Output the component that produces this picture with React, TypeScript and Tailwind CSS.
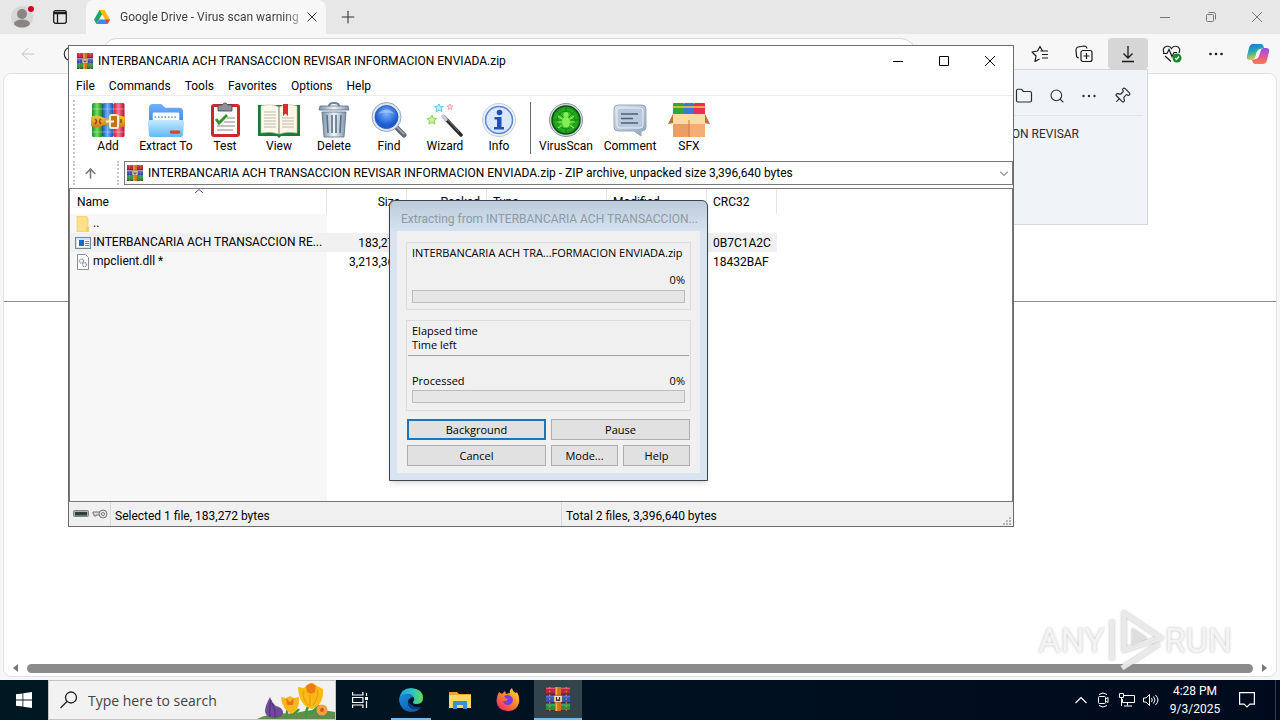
import React from 'react';
import { ArrowLeft, ArrowUp, Folder, Pin, Plus, RotateCw, Search } from 'lucide-react';

interface Tool {
  label: string;
  width: string;
  icon: React.ReactNode;
}

interface FileRow {
  name: string;
  size: string;
  crc: string;
  icon: React.ReactNode;
  selected?: boolean;
}

const RarIcon = ({ className }: { className: string }) => (
  <svg viewBox="0 0 16 16" className={className}>
    <rect x="0" y="0" width="16" height="5" fill="#c32440" />
    <rect x="0" y="5.500" width="16" height="5" fill="#3a55b8" />
    <rect x="0" y="11" width="16" height="5" fill="#2c8d3e" />
    <path d="M0 4.700h16M0 10.300h16M0 15.700h16" stroke="#40202c" strokeWidth=".6" />
    <path d="M2.500 0v16M13.500 0v16" stroke="#e3b04a" strokeWidth=".6" strokeDasharray="1 1.500" />
    <path d="M0 1h16M0 6.500h16M0 12h16" stroke="#fff" strokeOpacity=".25" strokeWidth=".8" />
    <rect x="6" y="0" width="4" height="16" fill="#d2721f" />
    <path d="M7 0v16" stroke="#f2b13c" strokeWidth="1" />
    <rect x="5.200" y="5.600" width="5.600" height="4.600" rx=".6" fill="#f5e7cf" stroke="#6a3a1b" strokeWidth=".4" />
    <path d="M7 6.600v2.200h2V6.600" fill="none" stroke="#4a2c2c" strokeWidth=".9" />
  </svg>
);

const AddIcon = () => (
  <svg viewBox="0 0 36 36" className="size-9">
    <defs>
      <linearGradient id="bookG"><stop stopColor="#1f8a2c" /><stop offset=".45" stopColor="#6fe05c" /><stop offset="1" stopColor="#16761f" /></linearGradient>
      <linearGradient id="bookB"><stop stopColor="#1a4fc4" /><stop offset=".45" stopColor="#6fb4ff" /><stop offset="1" stopColor="#1746a8" /></linearGradient>
      <linearGradient id="bookR"><stop stopColor="#c9163a" /><stop offset=".45" stopColor="#ff7590" /><stop offset="1" stopColor="#b3102d" /></linearGradient>
      <linearGradient id="belt" x2="0" y2="1"><stop stopColor="#fcc53a" /><stop offset="1" stopColor="#d07a1c" /></linearGradient>
    </defs>
    <rect x="2" y="1" width="11" height="34" rx="1.500" fill="url(#bookG)" />
    <rect x="12.500" y="1" width="11" height="34" rx="1.500" fill="url(#bookB)" />
    <rect x="23.500" y="1" width="11" height="34" rx="1.500" fill="url(#bookR)" />
    <path d="M2 7h32M2 30h32" stroke="#fff" strokeOpacity=".35" />
    <path d="M1 15q5-3 11 0t11 0 12 0v9q-6 3-12 0t-11 0-11 0z" fill="url(#belt)" />
    <rect x="20" y="13" width="8" height="13" rx="1.500" fill="#c8701a" stroke="#f8ead4" strokeWidth="2" />
    <path d="M16 19.500h8" stroke="#fff3df" strokeWidth="2" />
    <path d="M5 17q3 2 0 5M11 17q-3 2 0 5M31 17v4" fill="none" stroke="#8a4a17" strokeWidth="1.500" />
  </svg>
);

const ExtractIcon = () => (
  <svg viewBox="0 0 38 36" className="size-9">
    <defs>
      <linearGradient id="fback" x2="0" y2="1"><stop stopColor="#6fb0fb" /><stop offset="1" stopColor="#3480e4" /></linearGradient>
      <linearGradient id="ffront" x2="0" y2="1"><stop stopColor="#c3ebff" /><stop offset="1" stopColor="#62b8f5" /></linearGradient>
    </defs>
    <path d="M1 5q0-4 4-4h8q2 0 3 2l2 2h15q4 0 4 4v16H1z" fill="url(#fback)" />
    <rect x="5" y="10" width="28" height="13" rx="1.500" fill="#f7fbff" />
    <path d="M7 15h24" stroke="#7d98b5" strokeWidth="2" strokeDasharray="1.500 2" />
    <path d="M0 21q0-3 3-3h32q3 0 3 3l-1 12q0 3-3 3H4q-3 0-3-3z" fill="url(#ffront)" />
    <rect x="23" y="29" width="11" height="3.500" rx="1.500" fill="#e2402f" />
  </svg>
);

const TestIcon = () => (
  <svg viewBox="0 0 36 36" className="size-9">
    <rect x="4" y="2" width="29" height="33" rx="3" fill="#c92a2a" />
    <rect x="7" y="5" width="23" height="27" fill="#fbfaf6" />
    <path d="M11 3h4q3-4 6 0h4v6H11z" fill="#8b8f96" stroke="#3f4248" strokeWidth=".8" />
    <path d="M9 17l3 4 8-8" fill="none" stroke="#2e9434" strokeWidth="2.800" />
    <path d="M20 16h8M17 20h11M10 24h18M10 28h16" stroke="#8a8a8a" strokeWidth="1.200" />
  </svg>
);

const ViewIcon = () => (
  <svg viewBox="0 0 44 36" className="h-9 w-11">
    <path d="M1 3h42v31H24l-2 2-2-2H1z" fill="#1d7a34" />
    <path d="M4 4q10-3 18 1v27q-8-3-18-1z" fill="#fdf9ef" stroke="#c9bfa5" strokeWidth=".6" />
    <path d="M40 4q-10-3-18 1v27q8-3 18-1z" fill="#fbf6e8" stroke="#c9bfa5" strokeWidth=".6" />
    <path d="M7 10h12M7 13h12M7 16h12M7 19h12M7 22h12M7 25h12M25 16h12M25 19h12M25 22h12M25 25h12" stroke="#bdb9ab" strokeWidth="1" />
    <path d="M26 2h5v12l-2.500-2.500L26 14z" fill="#d62c2c" />
    <path d="M22 5v27" stroke="#968b6e" />
  </svg>
);

const DeleteIcon = () => (
  <svg viewBox="0 0 34 36" className="size-9">
    <defs>
      <linearGradient id="bin"><stop stopColor="#7c93aa" /><stop offset=".5" stopColor="#eff5fa" /><stop offset="1" stopColor="#7c93aa" /></linearGradient>
    </defs>
    <path d="M12 4q0-3 5-3t5 3" fill="none" stroke="#6f8296" strokeWidth="2" />
    <path d="M3 4h28l1 4H2z" fill="url(#bin)" stroke="#5d7083" strokeWidth=".8" />
    <path d="M5 10h24l-2 25H7z" fill="url(#bin)" stroke="#5d7083" strokeWidth=".8" />
    <path d="M10 13l1 18M15 13v18M19 13v18M24 13l-1 18" stroke="#5a7087" strokeWidth="1.600" />
  </svg>
);

const FindIcon = () => (
  <svg viewBox="0 0 36 36" className="size-9">
    <defs>
      <radialGradient id="lens" cy=".35"><stop stopColor="#7cb4ff" /><stop offset="1" stopColor="#1c5bd0" /></radialGradient>
    </defs>
    <path d="M25 25l8 8" stroke="#5f6873" strokeWidth="5" strokeLinecap="round" />
    <path d="M26 25l7 7" stroke="#a8b0ba" strokeWidth="1.500" strokeLinecap="round" />
    <circle cx="15.500" cy="15" r="14.500" fill="#dbe5f0" stroke="#8296b0" strokeWidth=".8" />
    <circle cx="15.500" cy="15" r="11.500" fill="url(#lens)" stroke="#2a55a8" strokeWidth=".8" />
    <path d="M7 12q8-9 17 0-8-3-17 0z" fill="#fff" fillOpacity=".35" />
  </svg>
);

const WizardIcon = () => (
  <svg viewBox="0 0 36 36" className="size-9">
    <path d="M17 15l17 18" stroke="#2b2b2e" strokeWidth="3.500" strokeLinecap="round" />
    <path d="M16 14l3 3.500" stroke="#c8ccd2" strokeWidth="3.500" strokeLinecap="round" />
    <path d="M21 18l11 12" stroke="#77777c" strokeWidth="1" />
    <path d="M12 2l1.200 2.500 3 0-2 2 .8 3L12 8.200 9 9.700l.5-3-2-2 3-.4z" fill="#b9ecfb" stroke="#58cbee" strokeWidth="1" />
    <path d="M23 2l.8 1.800 2 .3-1.500 1.400.4 2-1.700-1-1.800 1 .4-2L20 4.200l2-.3z" fill="#ffe3e6" stroke="#f08b98" strokeWidth=".8" />
    <path d="M5 13l1.200 3 3.500.4-2.500 2.200.8 3.400-3-1.500L2 22l.4-3.400L0 16.500l3.500-.6z" fill="#c6f39b" stroke="#86d94b" strokeWidth="1" />
  </svg>
);

const InfoIcon = () => (
  <svg viewBox="0 0 36 36" className="size-9">
    <circle cx="18" cy="18" r="16.500" fill="#eef3fa" stroke="#c3cfde" strokeWidth="1" />
    <circle cx="18" cy="18" r="13.500" fill="#dbe7fa" stroke="#5b83d3" strokeWidth="1.500" />
    <circle cx="18.500" cy="10.500" r="2.800" fill="#1d4fc0" />
    <path d="M13.500 15h7v10h2.500v2.500h-10V25H16v-7.500h-2.500z" fill="#1d4fc0" />
  </svg>
);

const VirusIcon = () => (
  <svg viewBox="0 0 36 36" className="size-9">
    <defs>
      <radialGradient id="scan"><stop stopColor="#5be02c" /><stop offset="1" stopColor="#14961a" /></radialGradient>
    </defs>
    <circle cx="18" cy="18" r="16.500" fill="#d5dae0" stroke="#8c949d" strokeWidth="1" />
    <circle cx="18" cy="18" r="14" fill="url(#scan)" stroke="#0d4f12" strokeWidth="1.500" />
    <path d="M18 5v26M5 18h26M9 9l18 18M27 9L9 27" stroke="#0f7d16" strokeWidth=".8" />
    <circle cx="18" cy="18" r="9" fill="none" stroke="#0f7d16" strokeWidth=".8" />
    <ellipse cx="18" cy="20" rx="4" ry="5.500" fill="#84ee58" />
    <circle cx="18" cy="12.500" r="2.500" fill="#84ee58" />
    <path d="M14 17l-4-3M14 20H9M14 23l-4 3M22 17l4-3M22 20h5M22 23l4 3" stroke="#84ee58" strokeWidth="1.200" />
  </svg>
);

const CommentIcon = () => (
  <svg viewBox="0 0 36 36" className="size-9">
    <defs>
      <linearGradient id="cmt" x2="1" y2="1"><stop stopColor="#dbe5f0" /><stop offset="1" stopColor="#8ea5bf" /></linearGradient>
    </defs>
    <path d="M6 3h24q4 0 4 4v18q0 4-4 4h-1v5l-7-5H6q-4 0-4-4V7q0-4 4-4z" fill="url(#cmt)" stroke="#9aa9ba" strokeWidth="1" />
    <rect x="5" y="6" width="26" height="20" rx="3" fill="#b9c9db" stroke="#e9f1f8" />
    <path d="M9 12h17M9 16.500h12M9 21h17" stroke="#4c6078" strokeWidth="1.400" />
  </svg>
);

const SfxIcon = () => (
  <svg viewBox="0 0 42 36" className="h-9 w-[42px]">
    <rect x="5" y="1" width="11" height="16" rx="1" fill="#2fa53a" />
    <rect x="16" y="1" width="10" height="16" rx="1" fill="#3a76dd" />
    <rect x="26" y="1" width="11" height="16" rx="1" fill="#ea2d55" />
    <path d="M5 5h32" stroke="#f2cf3d" strokeWidth="1.500" />
    <path d="M5 18h32v17H5z" fill="#f5ac75" />
    <path d="M5 18h16v17H5z" fill="#ec9d66" />
    <path d="M5 12h32l5 10H0z" fill="#fbdba4" />
    <path d="M5 12L0 22l5-1zM37 12l5 10-5-1z" fill="#b77240" />
    <path d="M21 18v17" stroke="#c77b45" />
  </svg>
);

const tools: Tool[] = [
  { label: 'Add', width: 'w-[50px]', icon: <AddIcon /> },
  { label: 'Extract To', width: 'w-[66px]', icon: <ExtractIcon /> },
  { label: 'Test', width: 'w-[52px]', icon: <TestIcon /> },
  { label: 'View', width: 'w-[56px]', icon: <ViewIcon /> },
  { label: 'Delete', width: 'w-[54px]', icon: <DeleteIcon /> },
  { label: 'Find', width: 'w-[56px]', icon: <FindIcon /> },
  { label: 'Wizard', width: 'w-[56px]', icon: <WizardIcon /> },
  { label: 'Info', width: 'w-[52px]', icon: <InfoIcon /> },
];

const scanTools: Tool[] = [
  { label: 'VirusScan', width: 'w-[60px]', icon: <VirusIcon /> },
  { label: 'Comment', width: 'w-[68px]', icon: <CommentIcon /> },
  { label: 'SFX', width: 'w-[50px]', icon: <SfxIcon /> },
];

const files: FileRow[] = [
  {
    name: '..',
    size: '',
    crc: '',
    icon: (
      <svg viewBox="0 0 16 16" className="size-4">
        <path d="M2 0h9l2 2v14H2z" fill="#ffe089" stroke="#e8c35b" strokeWidth=".6" />
        <path d="M11 11h3v5h-3z" fill="#f3cd62" />
      </svg>
    ),
  },
  {
    name: 'INTERBANCARIA ACH TRANSACCION RE...',
    size: '183,272',
    crc: '0B7C1A2C',
    selected: true,
    icon: (
      <svg viewBox="0 0 16 16" className="size-4">
        <rect x=".5" y="2.500" width="15" height="11" fill="#cfe3f3" stroke="#6b8ba4" />
        <rect x="2" y="5" width="12" height="7" fill="#fff" />
        <rect x="4" y="5" width="5" height="6" fill="#0a6fd0" />
        <path d="M10 6.500h4M10 8.500h4M10 10.500h4" stroke="#3a8ad6" strokeWidth="1" />
      </svg>
    ),
  },
  {
    name: 'mpclient.dll *',
    size: '3,213,368',
    crc: '18432BAF',
    icon: (
      <svg viewBox="0 0 16 16" className="size-4">
        <path d="M2.500.5h8l3 3v12h-11z" fill="#fff" stroke="#8d8d8d" />
        <circle cx="6.500" cy="7" r="2" fill="none" stroke="#8a929b" strokeWidth="1.400" strokeDasharray="1 .5" />
        <circle cx="9.500" cy="10.500" r="2" fill="none" stroke="#8a929b" strokeWidth="1.400" strokeDasharray="1 .5" />
      </svg>
    ),
  },
];

const WindowControls = () => (
  <div className="flex">
    <button aria-label="Minimize" className="flex w-[46px] items-center justify-center">
      <svg viewBox="0 0 10 10" className="size-2.5" stroke="currentColor"><path d="M0 5.500h10" /></svg>
    </button>
    <button aria-label="Maximize" className="flex w-[46px] items-center justify-center">
      <svg viewBox="0 0 10 10" className="size-2.5" fill="none" stroke="currentColor"><path d="M.5.5h9v9h-9z" /></svg>
    </button>
    <button aria-label="Close" className="flex w-[46px] items-center justify-center">
      <svg viewBox="0 0 10 10" className="size-2.5" stroke="currentColor"><path d="M0 0l10 10M10 0L0 10" /></svg>
    </button>
  </div>
);

const ToolButton = ({ tool }: { tool: Tool }) => (
  <button className={`flex flex-col items-center ${tool.width}`}>
    {tool.icon}
    <span className="whitespace-nowrap leading-4">{tool.label}</span>
  </button>
);

const TabStrip = () => (
  <div className="flex h-[34px] items-stretch bg-[#e7e7e7]">
    <button aria-label="Profile" className="ml-2 flex w-7 items-center justify-center">
      <svg viewBox="0 0 24 24" className="size-6">
        <circle cx="12" cy="12" r="11" fill="#d6d6d6" />
        <circle cx="12" cy="9" r="5" fill="#8a8582" />
        <ellipse cx="12" cy="18.500" rx="8" ry="4" fill="#8a8582" />
        <circle cx="21" cy="4" r="3" fill="#d0021b" />
      </svg>
    </button>
    <button aria-label="Tab actions" className="mx-2 flex w-8 items-center justify-center">
      <svg viewBox="0 0 14 14" className="size-3.5" fill="none" stroke="#1b1b1b" strokeWidth="1.300">
        <rect x=".7" y=".7" width="12.600" height="12.600" rx="2" />
        <path d="M1 3h12" strokeWidth="2.500" />
        <path d="M4.500 4v9" />
      </svg>
    </button>
    <div className="ml-0.5 flex w-[240px] items-center rounded-t-lg bg-[#f7f7f7] pl-2">
      <svg viewBox="0 0 16 14" className="h-3.5 w-4 shrink-0">
        <path d="M5.500 0h5L5 9.500 2.500 14 0 9.500z" fill="#1fa463" />
        <path d="M5.500 0h5L16 9.500h-5z" fill="#fbbc04" />
        <path d="M5 9.500h11L13.500 14h-11z" fill="#4285f4" />
        <path d="M11 9.500h5L13.500 14z" fill="#ea4335" />
      </svg>
      <span className="ml-2.5 min-w-0 flex-1 whitespace-nowrap bg-linear-to-r from-[#3b3b3b] from-90% to-[#c8c8c8] bg-clip-text text-[12px] text-transparent">
        Google Drive - Virus scan warning
      </span>
      <button aria-label="Close tab" className="mr-1 flex w-5 items-center justify-center text-[#333]">
        <svg viewBox="0 0 10 10" className="size-2.5" stroke="currentColor"><path d="M.5.500l9 9M9.500.500l-9 9" /></svg>
      </button>
    </div>
    <button aria-label="New tab" className="flex w-11 items-center justify-center text-[#333]">
      <Plus size={20} strokeWidth={1.300} />
    </button>
    <div className="flex-1" />
    <div className="flex text-[#777]">
      <button aria-label="Minimize browser" className="flex w-[46px] items-center justify-center">
        <svg viewBox="0 0 10 10" className="size-2.5" stroke="currentColor"><path d="M0 5.500h10" /></svg>
      </button>
      <button aria-label="Restore browser" className="flex w-[46px] items-center justify-center">
        <svg viewBox="0 0 10 10" className="size-2.5" fill="none" stroke="currentColor">
          <rect x=".5" y="2.500" width="7" height="7" rx="1" />
          <path d="M2.500 .5h5q2 0 2 2v5" />
        </svg>
      </button>
      <button aria-label="Close browser" className="flex w-[46px] items-center justify-center">
        <svg viewBox="0 0 10 10" className="size-2.5" stroke="currentColor"><path d="M0 0l10 10M10 0L0 10" /></svg>
      </button>
    </div>
  </div>
);

const DownloadsPanel = () => (
  <section className="absolute top-[31px] right-0 h-[156px] w-[360px] border border-[#d3d7dc] bg-[#f0f3f7] pr-1 text-[#2b2f33]">
    <div className="flex h-[46px] items-center justify-end gap-4 border-b border-[#e0e3e7] pt-1.5 pr-3">
      <Folder size={18} strokeWidth={1.600} />
      <Search size={16} strokeWidth={1.600} />
      <svg viewBox="0 0 16 4" className="h-1 w-4" fill="currentColor">
        <circle cx="2.500" cy="2" r="1.200" /><circle cx="8" cy="2" r="1.200" /><circle cx="13.500" cy="2" r="1.200" />
      </svg>
      <Pin size={18} strokeWidth={1.600} className="rotate-45" />
    </div>
    <p className="mt-2.5 mr-16 text-right text-[12px] leading-4">TRANSACCION REVISAR</p>
  </section>
);

const BrowserToolbar = () => (
  <div className="flex h-[39px] items-center bg-[#f7f7f7]">
    <button aria-label="Back" className="flex w-14 justify-center text-[#c4c4c4]">
      <ArrowLeft size={20} strokeWidth={1.200} />
    </button>
    <button aria-label="Refresh" className="flex w-[46px] justify-center pr-4 text-[#222]">
      <RotateCw size={18} strokeWidth={1.500} />
    </button>
    <input
      aria-label="Address"
      readOnly
      className="h-[31px] min-w-0 flex-1 rounded-[15px] border border-[#d6d6d6] bg-white"
    />
    <div className="ml-[104px] flex gap-1 pr-1 text-[#1b1b1b]">
      <button aria-label="Favorites" className="flex h-[31px] w-10 items-center justify-center">
        <svg viewBox="0 0 18 18" className="size-[18px]" fill="none" stroke="currentColor" strokeWidth="1.200" strokeLinejoin="round">
          <path d="M11.500 6L9 1.500 6.500 6 1 7l4 4-1 5.500 4.500-2.500M9.500 6H17M11 9.500h6M11 13h6" />
        </svg>
      </button>
      <button aria-label="Collections" className="flex h-[31px] w-10 items-center justify-center">
        <svg viewBox="0 0 18 18" className="size-[18px]" fill="none" stroke="currentColor" strokeWidth="1.200">
          <path d="M4 13Q2 13 1.500 11L1 5q0-2.500 2-3l6-1q2.500 0 3 2.500" />
          <rect x="6" y="5.500" width="11" height="11" rx="2" />
          <path d="M11.500 8v6M8.500 11h6" />
        </svg>
      </button>
      <div className="relative">
        <button aria-label="Downloads" className="flex h-[31px] w-10 items-center justify-center rounded bg-[#d6d6d6]">
          <svg viewBox="0 0 14 18" className="h-[18px] w-3.5" fill="none" stroke="currentColor" strokeWidth="1.300">
            <path d="M7 1v12M2.500 8.500L7 13l4.500-4.500M1 16.500h12" />
          </svg>
        </button>
        <DownloadsPanel />
      </div>
      <button aria-label="Browser essentials" className="flex h-[31px] w-10 items-center justify-center">
        <svg viewBox="0 0 20 18" className="h-[18px] w-5" fill="none" stroke="currentColor" strokeWidth="1.200">
          <path d="M2 8Q0 3 4 1.500q4-1 5.500 2 2-3 5.500-2Q19 3 17 8M3 11l6 5.500M1 8.500h4l2-4 3 7 2-4h3" />
          <circle cx="15" cy="13" r="4.500" fill="#128a2a" stroke="none" />
          <path d="M13 13l1.500 1.500L17 11.500" stroke="#fff" />
        </svg>
      </button>
      <button aria-label="Settings and more" className="flex h-[31px] w-10 items-center justify-center">
        <svg viewBox="0 0 14 4" className="h-1 w-3.5" fill="currentColor">
          <circle cx="1.500" cy="2" r="1.300" /><circle cx="7" cy="2" r="1.300" /><circle cx="12.500" cy="2" r="1.300" />
        </svg>
      </button>
      <button aria-label="Copilot" className="flex h-[31px] w-9 items-center justify-center">
        <svg viewBox="0 0 24 22" className="h-[22px] w-6">
          <defs>
            <linearGradient id="cpA" x2=".3" y2="1"><stop stopColor="#1a6fe0" /><stop offset=".5" stopColor="#1fa9b4" /><stop offset="1" stopColor="#e5d13a" /></linearGradient>
            <linearGradient id="cpB" x2="0" y2="1"><stop stopColor="#8d52e8" /><stop offset=".5" stopColor="#e0559c" /><stop offset="1" stopColor="#fa7e42" /></linearGradient>
          </defs>
          <path d="M7 1h8q2 0 3 4l-4 1q-2 0-3 3l-2 6q-1 2-3 2H4q-4 0-3-4l2-8q1-4 4-4z" fill="url(#cpA)" />
          <path d="M17 21H9q-2 0-3-4l4-1q2 0 3-3l2-6q1-2 3-2h2q4 0 3 4l-2 8q-1 4-4 4z" fill="url(#cpB)" />
          <path d="M11 8h3l-2 6H9.500z" fill="#f7f7f7" />
        </svg>
      </button>
    </div>
  </div>
);

const Watermark = () => (
  <div className="pointer-events-none absolute right-11 bottom-[2px] flex items-center font-['Roboto','Liberation_Sans',sans-serif] text-[34px] leading-none text-[#f4f4f4] [text-shadow:0_0_3px_#bbb]">
    <span>ANY</span>
    <svg viewBox="0 0 60 64" className="h-16 w-[60px] drop-shadow-[0_0_1px_#aaa]" fill="none" stroke="#f1f1f1" strokeOpacity=".85" strokeLinejoin="round">
      <path d="M19 42V5L56 30z" strokeWidth="5" />
      <path d="M7 12v40M17 60l37-24" strokeWidth="5" />
      <path d="M27 20v19l15-9z" fill="#dedede" stroke="none" />
    </svg>
    <span>RUN</span>
  </div>
);

const Browser = () => (
  <div className="flex flex-1 flex-col bg-[#f7f7f7]">
    <TabStrip />
    <BrowserToolbar />
    <main className="mx-[3px] mb-[3px] flex flex-1 flex-col rounded-lg border border-[#e2e2e2] bg-white">
      <hr className="mt-[227px] border-[#8f8f8f]" />
      <div className="flex-1" />
      <div className="relative mb-0.5 flex h-3 items-center px-2">
        <button aria-label="Scroll left"><svg viewBox="0 0 6 8" className="h-2 w-1.5" fill="#777"><path d="M6 0v8L1 4z" /></svg></button>
        <div className="mx-[9px] h-[9px] flex-1 rounded-full bg-[#8b8b8b]" />
        <button aria-label="Scroll right"><svg viewBox="0 0 6 8" className="h-2 w-1.5" fill="#777"><path d="M0 0v8l5-4z" /></svg></button>
        <Watermark />
      </div>
    </main>
  </div>
);

const Grip = () => <div className="w-0.5 border-l-2 border-dotted border-[#c4c4c4]" />;

const headCell = 'h-[25px] border-r border-[#e5e5e5] px-1.5 font-normal';

const FileList = () => (
  <div className="flex flex-1 border border-[#7a7a7a] bg-white">
    <table className="h-full w-[707px] table-fixed border-separate border-spacing-0 text-left">
      <colgroup>
        <col className="w-[257px]" />
        <col className="w-[80px]" />
        <col className="w-[80px]" />
        <col className="w-[120px]" />
        <col className="w-[100px]" />
        <col className="w-[70px]" />
      </colgroup>
      <thead>
        <tr>
          <th className={`${headCell} pl-[7px]`}>
            <div className="relative">
              Name
              <svg viewBox="0 0 8 4" className="absolute -top-1 left-[118px] h-1 w-2" fill="none" stroke="#555"><path d="M0 4l4-3.500L8 4" /></svg>
            </div>
          </th>
          <th className={`${headCell} text-right`}>Size</th>
          <th className={`${headCell} text-right`}>Packed</th>
          <th className={headCell}>Type</th>
          <th className={headCell}>Modified</th>
          <th className={headCell}>CRC32</th>
        </tr>
      </thead>
      <tbody>
        {files.map((file) => (
          <tr key={file.name} className={file.selected ? 'h-[19px] bg-[#f0f0f0]' : 'h-[19px]'}>
            <td className={file.selected ? 'p-0' : 'bg-[#f7f7f7] p-0'}>
              <div className="flex items-center gap-0.5 pl-[5px] leading-[19px] whitespace-nowrap">
                {file.icon}
                {file.name}
              </div>
            </td>
            <td className="p-0 pr-1.5 text-right">{file.size}</td>
            <td />
            <td />
            <td />
            <td className="p-0 pl-1.5">{file.crc}</td>
          </tr>
        ))}
        <tr>
          <td className="bg-[#f7f7f7]" />
          <td colSpan={5} />
        </tr>
      </tbody>
    </table>
  </div>
);

const ArchiveWindow = () => (
  <section className="absolute top-[45px] left-[68px] flex h-[482px] w-[946px] flex-col border border-[#6b6b6b] bg-white text-[12px] text-black">
    <header className="flex h-[30px] items-stretch pl-2">
      <div className="flex flex-1 items-center gap-[5px]">
        <RarIcon className="size-4" />
        <h1>INTERBANCARIA ACH TRANSACCION REVISAR INFORMACION ENVIADA.zip</h1>
      </div>
      <WindowControls />
    </header>
    <nav className="flex h-5 items-center gap-3.5 border-b border-[#ececec] pl-[7px]">
      {['File', 'Commands', 'Tools', 'Favorites', 'Options', 'Help'].map((item) => (
        <button key={item}>{item}</button>
      ))}
    </nav>
    <div className="flex h-[62px] items-stretch pt-1 pl-1">
      <Grip />
      <div className="flex pt-0.5 pl-2">
        {tools.map((tool) => <ToolButton key={tool.label} tool={tool} />)}
        <div className="mx-[5px] mb-1 w-px bg-[#6b6b6b]" />
        {scanTools.map((tool) => <ToolButton key={tool.label} tool={tool} />)}
      </div>
    </div>
    <div className="flex h-[30px] items-stretch pt-[3px] pb-[3px] pl-1">
      <Grip />
      <button aria-label="Up one level" className="flex w-[30px] items-center justify-center text-[#777]">
        <ArrowUp size={15} strokeWidth={2.500} />
      </button>
      <div className="w-3" />
      <Grip />
      <div className="ml-[5px] flex flex-1 items-center border border-[#7a7a7a] pl-0.5">
        <RarIcon className="size-4" />
        <input
          aria-label="Archive path"
          readOnly
          value="INTERBANCARIA ACH TRANSACCION REVISAR INFORMACION ENVIADA.zip - ZIP archive, unpacked size 3,396,640 bytes"
          className="min-w-0 flex-1 pl-[5px] outline-none"
        />
        <button aria-label="Show paths" className="flex w-4 justify-center">
          <svg viewBox="0 0 8 5" className="h-[5px] w-2" fill="none" stroke="#444"><path d="M0 .5l4 4 4-4" /></svg>
        </button>
      </div>
    </div>
    <FileList />
    <footer className="flex h-6 items-stretch bg-[#f0f0f0] leading-7">
      <div className="flex w-[42px] items-center gap-[3px] border-r border-[#d9d9d9] pl-1">
        <svg viewBox="0 0 16 8" className="h-2 w-4"><rect x=".5" y=".5" width="15" height="6" rx="1" fill="#aab2b0" stroke="#7c8583" /><rect x="2" y="2" width="12" height="3.500" fill="#333e3c" /></svg>
        <svg viewBox="0 0 16 10" className="h-2.5 w-4" fill="none" stroke="#777"><path d="M8 3H1v2h1v2h2V6h4" fill="#ddd" /><circle cx="11" cy="5" r="4" fill="#e4e4e4" /><circle cx="11" cy="5" r="1.500" fill="#fff" /></svg>
      </div>
      <p className="w-[450px] pl-1">Selected 1 file, 183,272 bytes</p>
      <p className="flex-1 border-l border-[#d9d9d9] pl-1">Total 2 files, 3,396,640 bytes</p>
      <svg viewBox="0 0 10 10" className="mr-px size-2.5 self-end" fill="#b5b5b5">
        <path d="M7 1h2v2H7zM4 4h2v2H4zM7 4h2v2H7zM1 7h2v2H1zM4 7h2v2H4zM7 7h2v2H7z" />
      </svg>
    </footer>
  </section>
);

const dialogButton = 'h-[21px] border border-[#adadad] bg-[#e1e1e1] pt-px';

const ExtractDialog = () => (
  <section className="absolute top-[200px] left-[389px] w-[319px] rounded-t-md border border-[#3c4450] bg-[#d8e4ee] bg-linear-to-b from-[#bccbdb] to-[#d8e4f0] to-[32px] px-[7px] pb-[7px] text-black shadow-md">
    <h2 className="h-[30px] pl-1 text-[12px] leading-9 whitespace-nowrap text-[#8e99a5]">
      Extracting from INTERBANCARIA ACH TRANSACCION...
    </h2>
    <div className="bg-[#f0f0f0] px-[9px] pt-[11px] pb-[7px] font-['Open_Sans','Noto_Sans',sans-serif] text-[11px]">
      <div className="h-[68px] border border-[#dcdcdc] px-[5px] leading-[14px]">
        <p className="pt-[3px] whitespace-nowrap">INTERBANCARIA ACH TRA...FORMACION ENVIADA.zip</p>
        <p className="mt-[13px] text-right">0%</p>
        <div className="mt-[3px] h-[13px] border border-[#bcbcbc] bg-[#e6e6e6]" />
      </div>
      <div className="mt-2.5 h-[91px] border border-[#dcdcdc] leading-[14px]">
        <div className="mx-px border-b border-[#a0a0a0] px-1 pt-[3px] pb-[3px]">
          <p>Elapsed time</p>
          <p>Time left</p>
        </div>
        <div className="mt-[18px] flex justify-between px-[5px]">
          <span>Processed</span>
          <span>0%</span>
        </div>
        <div className="mx-[5px] mt-0.5 h-[13px] border border-[#bcbcbc] bg-[#e6e6e6]" />
      </div>
      <div className="mt-2 grid grid-cols-[139px_67px_67px] gap-x-[5px] gap-y-[5px] pl-px">
        <button className="h-[21px] border-2 border-[#1a75bb] bg-[#e1e1e1] leading-[17px]">Background</button>
        <button className={`${dialogButton} col-span-2`}>Pause</button>
        <button className={dialogButton}>Cancel</button>
        <button className={dialogButton}>Mode...</button>
        <button className={dialogButton}>Help</button>
      </div>
    </div>
  </section>
);

const Flowers = () => (
  <svg viewBox="0 0 78 38" className="h-[38px] w-[78px] shrink-0">
    <path d="M0 38q16-8 36-5 20-7 42-2v7z" fill="#5f8f4b" />
    <path d="M30 37q-1-8 3-14M49 37q-1-10 5-14M52 32q6-2 10-8M33 34q6-2 9-6" fill="none" stroke="#3f9a3a" strokeWidth="2.500" />
    <path d="M13 16q2 6 6 9 8 2 7 8-3 5-11 4-7-2-7-7 0-5 5-14z" fill="#6d4a9c" />
    <path d="M14 19q-2 9-1 17M15 22q4 7 3 14" fill="none" stroke="#4b2f78" />
    <path d="M24 16l5 1 4-2 4 2 5-1q1 12-7 17-10-4-11-17z" fill="#f9b71e" />
    <path d="M29 17l4 4 4-4-1 7h-6z" fill="#e8741a" />
    <path d="M41 6l6 1 4-4 5-1 4 3 6 3q1 16-11 20-13-3-14-22z" fill="#fcb916" />
    <path d="M49 5l5-3 5 3-1 6-4 2-4-2z" fill="#ec7c16" />
    <path d="M53 14v11M46 10q0 9 5 14M61 9q0 9-5 15" fill="none" stroke="#e59a10" />
    <circle cx="65" cy="29" r="5.500" fill="#f6a13d" />
    <circle cx="65" cy="29" r="2" fill="#c95c1a" />
  </svg>
);

const Taskbar = () => (
  <footer className="flex h-10 items-stretch bg-linear-to-r from-[#001822] to-[#000a1e] text-white">
    <button aria-label="Start" className="flex w-12 items-center justify-center">
      <svg viewBox="0 0 16 16" className="size-4" fill="#fff"><path d="M0 2.300l6.500-.9v6.200H0zM7.300 1.300L16 0v7.600H7.300zM0 8.400h6.500v6.200L0 13.700zM7.300 8.400H16V16l-8.700-1.300z" /></svg>
    </button>
    <label className="flex w-72 items-center border border-[#c4c4c4] bg-[#f2f2f2] pl-[11px]">
      <svg viewBox="0 0 18 18" className="size-[18px]" fill="none" stroke="#222" strokeWidth="1.300"><circle cx="11" cy="6.500" r="5.500" /><path d="M7 10.500L.5 17" /></svg>
      <input
        aria-label="Search"
        placeholder="Type here to search"
        className="ml-2.5 min-w-0 flex-1 font-['Open_Sans','Noto_Sans',sans-serif] text-[14px] placeholder:text-[#444] outline-none"
      />
      <Flowers />
    </label>
    <button aria-label="Task view" className="flex w-12 items-center justify-center">
      <svg viewBox="0 0 16 16" className="size-4" fill="none" stroke="#fff" strokeWidth="1.200"><path d="M.6 0v3h10.300V0M.6 16v-3h10.300v3M.6 5.500h10.300v5H.6zM14.500 1v3M14.500 9v7" /><path d="M13 5h3v3h-3z" fill="#fff" stroke="none" /></svg>
    </button>
    <button aria-label="Edge" className="flex w-[54px] items-center justify-center">
      <span className="flex h-10 w-10 items-center justify-center border-b-2 border-[#76b9ed] pt-0.5">
        <svg viewBox="0 0 24 24" className="size-6">
          <defs>
            <linearGradient id="edA" x2="1"><stop stopColor="#1f9be0" /><stop offset=".6" stopColor="#2fc6c0" /><stop offset="1" stopColor="#66e04f" /></linearGradient>
            <linearGradient id="edB" x2="1" y2="1"><stop stopColor="#1b8fe0" /><stop offset="1" stopColor="#0c4fa0" /></linearGradient>
          </defs>
          <path d="M0 11Q2 0 12 0q12 1 12 10 0 6-7 6-3 0-3-2 2-2 1-4-2-4-7-4-6 1-8 5z" fill="url(#edA)" />
          <path d="M0 11q3-5 8-5 5 0 6 3-5 1-5 6 1 6 7 6 4 0 6-2-3 5-10 5Q1 23 0 11z" fill="url(#edB)" />
          <path d="M9 14q0 7 7 7 4 0 6-2-4 1-8-1-3-2-5-4z" fill="#0a3d86" />
        </svg>
      </span>
    </button>
    <button aria-label="File Explorer" className="flex w-11 items-center justify-center">
      <svg viewBox="0 0 22 18" className="h-[18px] w-[22px]"><path d="M0 1h8l2 2h12v14H0z" fill="#e8a82a" /><path d="M0 4h22v13H0z" fill="#fcd667" /><path d="M4 18v-8h14v8h-4v-4H8v4z" fill="#3c8fd0" /></svg>
    </button>
    <button aria-label="Firefox" className="flex w-[52px] items-center justify-center">
      <svg viewBox="0 0 24 24" className="size-6">
        <defs>
          <linearGradient id="ff" x1="1" x2=".2" y2="1"><stop stopColor="#ffe43c" /><stop offset=".5" stopColor="#ff8a26" /><stop offset="1" stopColor="#f0266f" /></linearGradient>
        </defs>
        <path d="M3 4l3 2 3-3 1 3 4-1q-1-3 2-5 1 4 4 5l1-1q3 5 2 11-3 9-12 8Q1 22 .5 13 1 7 3 4z" fill="url(#ff)" />
        <path d="M8 8q6-3 9 3 0 6-6 6-4-1-4-4 3 1 5-2-3 0-4-3z" fill="#7a3fd8" />
      </svg>
    </button>
    <button aria-label="WinRAR" className="flex w-12 items-center justify-center border-b-2 border-[#76b9ed] bg-[#33444c]">
      <RarIcon className="size-6" />
    </button>
    <div className="flex-1" />
    <div className="flex items-center gap-2">
      <button aria-label="Show hidden icons"><svg viewBox="0 0 12 8" className="h-2 w-3" fill="none" stroke="#fff" strokeWidth="1.200"><path d="M.5 7L6 1.500 11.500 7" /></svg></button>
      <button aria-label="Meet now"><svg viewBox="0 0 16 16" className="size-4" fill="none" stroke="#fff"><path d="M4 2.500Q8-.5 12 2.500M4 13.500q4 3 8 0" /><rect x="3.500" y="4.500" width="7" height="7" rx="1" /><path d="M10.500 7l2.500-1.500v5L10.500 9" /></svg></button>
      <button aria-label="Network"><svg viewBox="0 0 16 14" className="h-3.5 w-4" fill="none" stroke="#fff"><path d="M5 2.500h10.500v7H3.500V6M8.500 9.500v3M5 13h8M.5.500h4v4h-4zM2.500 4.500V13" /></svg></button>
      <button aria-label="Volume"><svg viewBox="0 0 16 14" className="h-3.5 w-4" fill="none" stroke="#fff"><path d="M.5 5v4H3l3.500 3.500v-11L3 5zM8.500 5q1.500 2 0 4M10.500 3.500q3 3.500 0 7M12.500 2q5 5 0 10" /></svg></button>
    </div>
    <button className="flex w-[72px] flex-col items-center justify-center text-[12px] leading-[18px]">
      <span>4:28 PM</span>
      <span>9/3/2025</span>
    </button>
    <button aria-label="Notifications" className="mr-1 flex w-[45px] items-center justify-center border-r border-[#33414f]">
      <svg viewBox="0 0 16 16" className="mr-3 size-4" fill="none" stroke="#fff" strokeWidth="1.200"><path d="M.6.600h14.800v11.500H11L8 15l-3-2.900H.6z" /></svg>
    </button>
  </footer>
);

export default function App() {
  return (
    <div className="relative flex min-h-screen flex-col overflow-hidden font-['Roboto','Open_Sans',sans-serif]">
      <Browser />
      <ArchiveWindow />
      <ExtractDialog />
      <Taskbar />
    </div>
  );
}
